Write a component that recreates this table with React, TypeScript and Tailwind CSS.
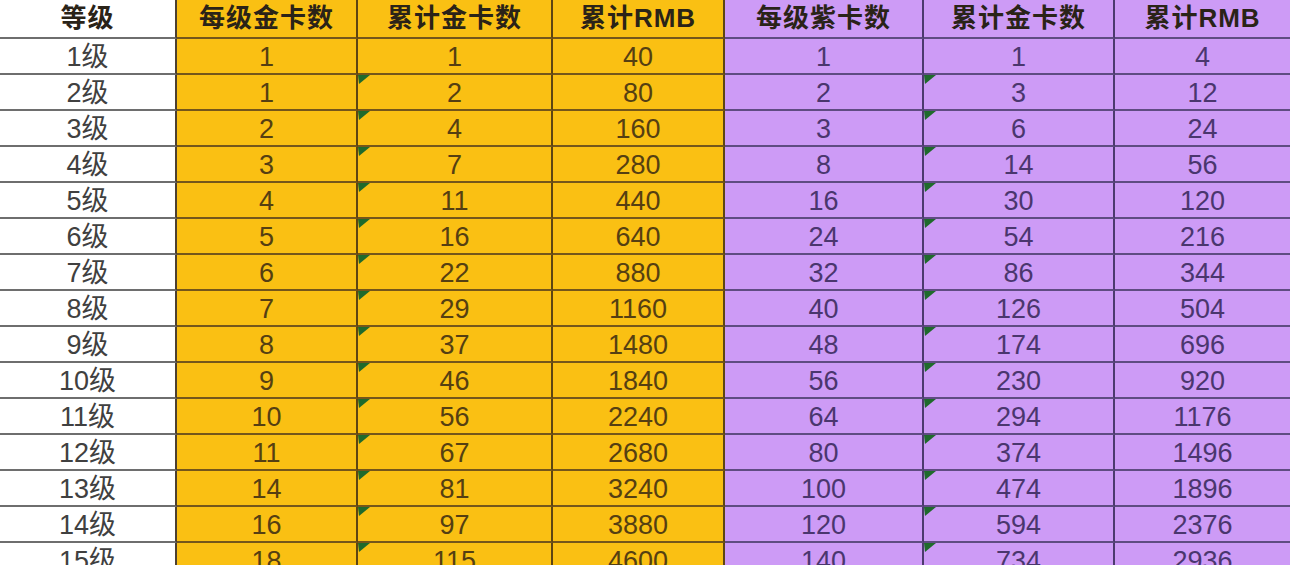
const headers = ["等级", "每级金卡数", "累计金卡数", "累计RMB", "每级紫卡数", "累计金卡数", "累计RMB"];

const rows: (string | number)[][] = [
  ["1级", 1, 1, 40, 1, 1, 4],
  ["2级", 1, 2, 80, 2, 3, 12],
  ["3级", 2, 4, 160, 3, 6, 24],
  ["4级", 3, 7, 280, 8, 14, 56],
  ["5级", 4, 11, 440, 16, 30, 120],
  ["6级", 5, 16, 640, 24, 54, 216],
  ["7级", 6, 22, 880, 32, 86, 344],
  ["8级", 7, 29, 1160, 40, 126, 504],
  ["9级", 8, 37, 1480, 48, 174, 696],
  ["10级", 9, 46, 1840, 56, 230, 920],
  ["11级", 10, 56, 2240, 64, 294, 1176],
  ["12级", 11, 67, 2680, 80, 374, 1496],
  ["13级", 14, 81, 3240, 100, 474, 1896],
  ["14级", 16, 97, 3880, 120, 594, 2376],
  ["15级", 18, 115, 4600, 140, 734, 2936],
];

// per-column cell styling
const cellTone = [
  "bg-white text-[#404040] border-b-[#6e6e6e] border-r-[#4d4030] border-r-2",
  "bg-[#fac013] text-[#553f12] border-b-[#74561a] border-r-[#5e4512] border-r-2",
  "bg-[#fac013] text-[#553f12] border-b-[#74561a] border-r-[#5e4512] border-r-2",
  "bg-[#fac013] text-[#553f12] border-b-[#74561a] border-r-[#5e4512] border-r-2",
  "bg-[#cd9bf6] text-[#4a366e] border-b-[#5f4c82] border-r-[#4c3a6e] border-r-2",
  "bg-[#cd9bf6] text-[#4a366e] border-b-[#5f4c82] border-r-[#4c3a6e] border-r-2",
  "bg-[#cd9bf6] text-[#4a366e] border-b-[#5f4c82]",
];

function Flag() {
  return (
    <svg className="absolute left-0 top-0" width="12" height="9" viewBox="0 0 12 9">
      <polygon points="0,0 12,0 1,9" fill="#1f6a2c" />
    </svg>
  );
}

export default function App() {
  return (
    <div
      className="h-[565px] w-[1290px] overflow-hidden bg-white"
      style={{ fontFamily: '"Liberation Sans", "Noto Sans CJK SC", sans-serif' }}
    >
      <div className="grid grid-cols-[177px_181px_195px_172px_199px_191px_175px]">
        {headers.map((h, i) => (
          <div
            key={"h" + i}
            className={`flex h-[39px] items-center justify-center border-b-2 text-[26px] font-bold tracking-[1px] ${cellTone[i]}`}
            style={{ color: "#2a2318" }}
          >
            {h}
          </div>
        ))}
        {rows.map((r, ri) =>
          r.map((v, ci) => (
            <div
              key={ri + "-" + ci}
              className={`relative flex h-[36px] items-center justify-center border-b-2 text-[27px] leading-none ${cellTone[ci]}`}
            >
              {ri > 0 && (ci === 2 || ci === 5) && <Flag />}
              <span className="pt-[2px]">{v}</span>
            </div>
          ))
        )}
      </div>
    </div>
  );
}
